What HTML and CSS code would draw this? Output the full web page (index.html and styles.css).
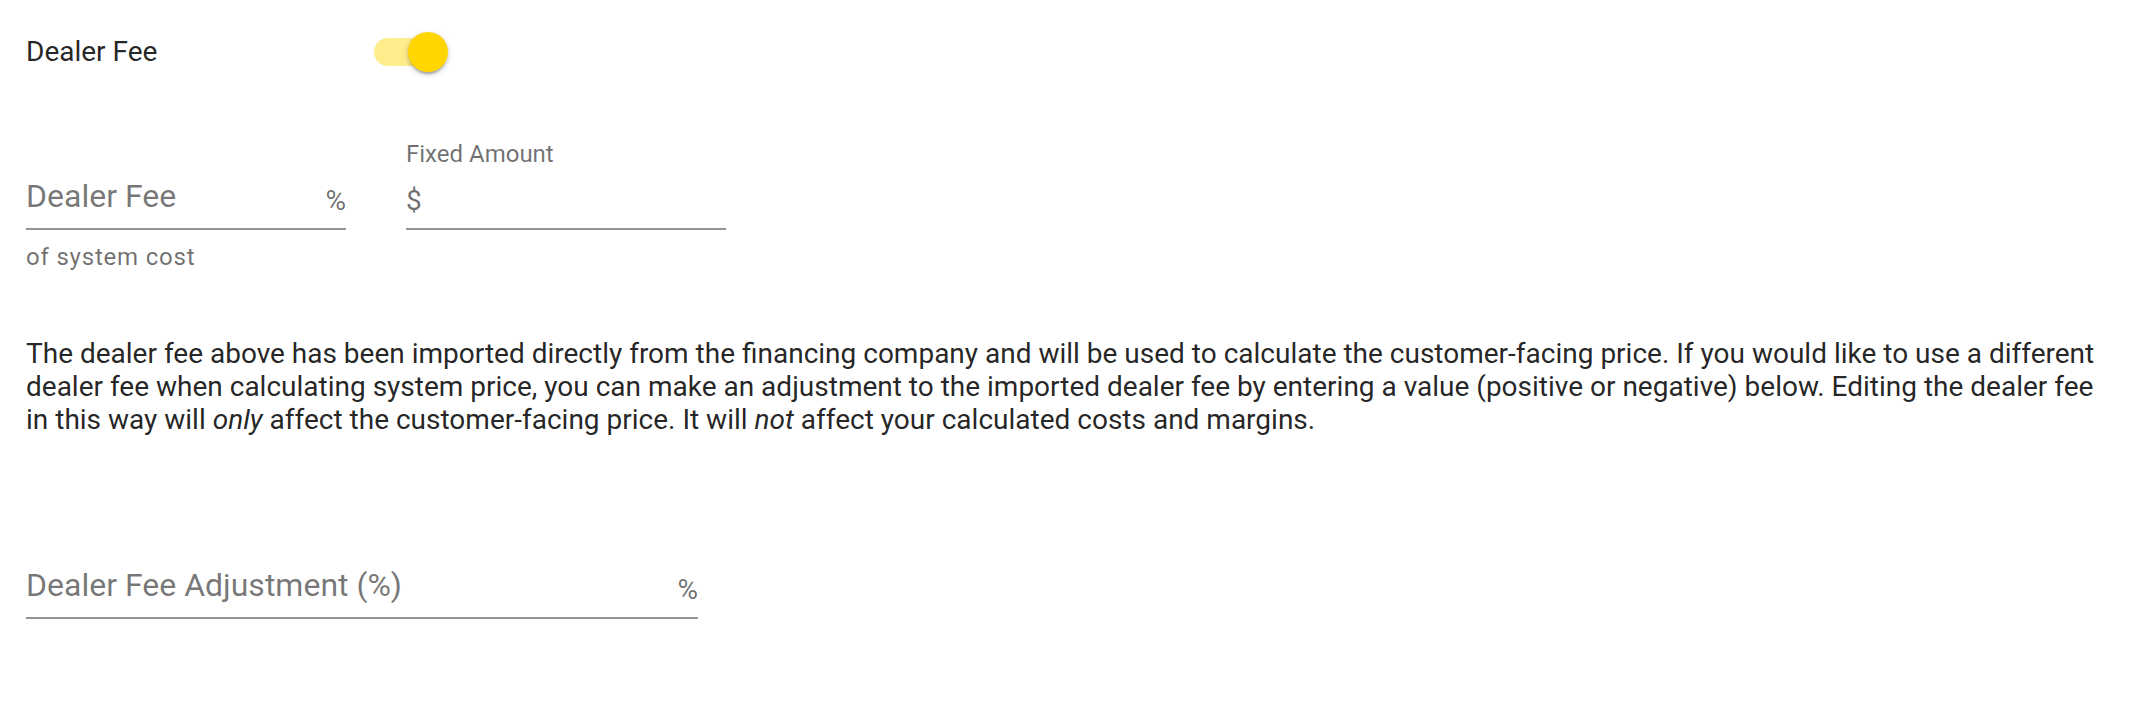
FILE: index.html
```html
<!DOCTYPE html>
<html lang="en">

<head>
    <meta charset="UTF-8">
    <title>Dealer Fee</title>
    <link rel="stylesheet" href="styles.css">
</head>

<body>
    <div class="page">

        <!-- Dealer fee toggle -->
        <div class="switch-row">
            <div class="switch-label">Dealer Fee</div>
            <div class="switch on">
                <div class="switch-track"></div>
                <div class="switch-thumb"></div>
            </div>
        </div>

        <!-- Fee inputs -->
        <div class="fields-row">
            <div class="field field-half">
                <div class="field-label"></div>
                <div class="field-input">
                    <span class="field-placeholder">Dealer Fee</span>
                    <span class="field-suffix">%</span>
                </div>
                <div class="field-hint">of system cost</div>
            </div>

            <div class="field field-half">
                <div class="field-label">Fixed Amount</div>
                <div class="field-input">
                    <span class="field-prefix">$</span>
                </div>
            </div>
        </div>

        <p class="note">
            The dealer fee above has been imported directly from the financing company and will be used to calculate the customer-facing price. If you would like to use a different dealer fee when calculating system price, you can make an adjustment to the imported dealer fee by entering a value (positive or negative) below. Editing the dealer fee in this way will <em>only</em> affect the customer-facing price. It will <em>not</em> affect your calculated costs and margins.
        </p>

        <div class="field field-wide">
            <div class="field-input">
                <span class="field-placeholder">Dealer Fee Adjustment (%)</span>
                <span class="field-suffix">%</span>
            </div>
        </div>

    </div>
</body>

</html>
```

FILE: styles.css
```css
body {
    margin: 0;
    font-family: Roboto, "Liberation Sans", sans-serif;
    background-color: #fff;
    color: rgba(0, 0, 0, 0.87);
}

.page {
    padding: 24px 26px 0 26px;
}

/* Toggle row */
.switch-row {
    display: flex;
    align-items: center;
    height: 56px;
}

.switch-label {
    width: 348px;
    font-size: 28px;
    line-height: 32px;
}

.switch {
    position: relative;
    width: 76px;
    height: 40px;
}

.switch-track {
    position: absolute;
    left: 0;
    top: 6px;
    width: 72px;
    height: 28px;
    border-radius: 14px;
    background-color: #ffd600;
    opacity: 0.45;
}

.switch-thumb {
    position: absolute;
    left: 34px;
    top: 0;
    width: 40px;
    height: 40px;
    border-radius: 50%;
    background-color: #ffd600;
    box-shadow: 0 4px 2px -2px rgba(0, 0, 0, 0.2), 0 2px 4px 0 rgba(0, 0, 0, 0.14), 0 2px 6px 0 rgba(0, 0, 0, 0.12);
}

/* Text fields */
.fields-row {
    display: flex;
    gap: 60px;
    margin-top: 59.5px;
}

.field-half {
    width: 320px;
}

.field-wide {
    width: 672px;
    margin-top: 129px;
}

.field-label {
    height: 28px;
    margin-bottom: 8px;
    font-size: 24px;
    line-height: 28px;
    color: rgba(0, 0, 0, 0.56);
}

.field-input {
    display: flex;
    align-items: baseline;
    justify-content: space-between;
    height: 40px;
    padding-bottom: 12px;
    border-bottom: 2px solid rgba(0, 0, 0, 0.42);
    line-height: 40px;
}

.field-placeholder {
    font-size: 32px;
    color: rgba(0, 0, 0, 0.54);
}

.field-prefix,
.field-suffix {
    align-self: flex-end;
    font-size: 28px;
    line-height: 30px;
    color: rgba(0, 0, 0, 0.56);
}

.field-hint {
    margin-top: 13.5px;
    font-size: 24px;
    line-height: 28px;
    letter-spacing: 0.8px;
    color: rgba(0, 0, 0, 0.56);
}

/* Info paragraph */
.note {
    margin: 65.5px 0 0 0;
    font-size: 28px;
    line-height: 33px;
}
```
